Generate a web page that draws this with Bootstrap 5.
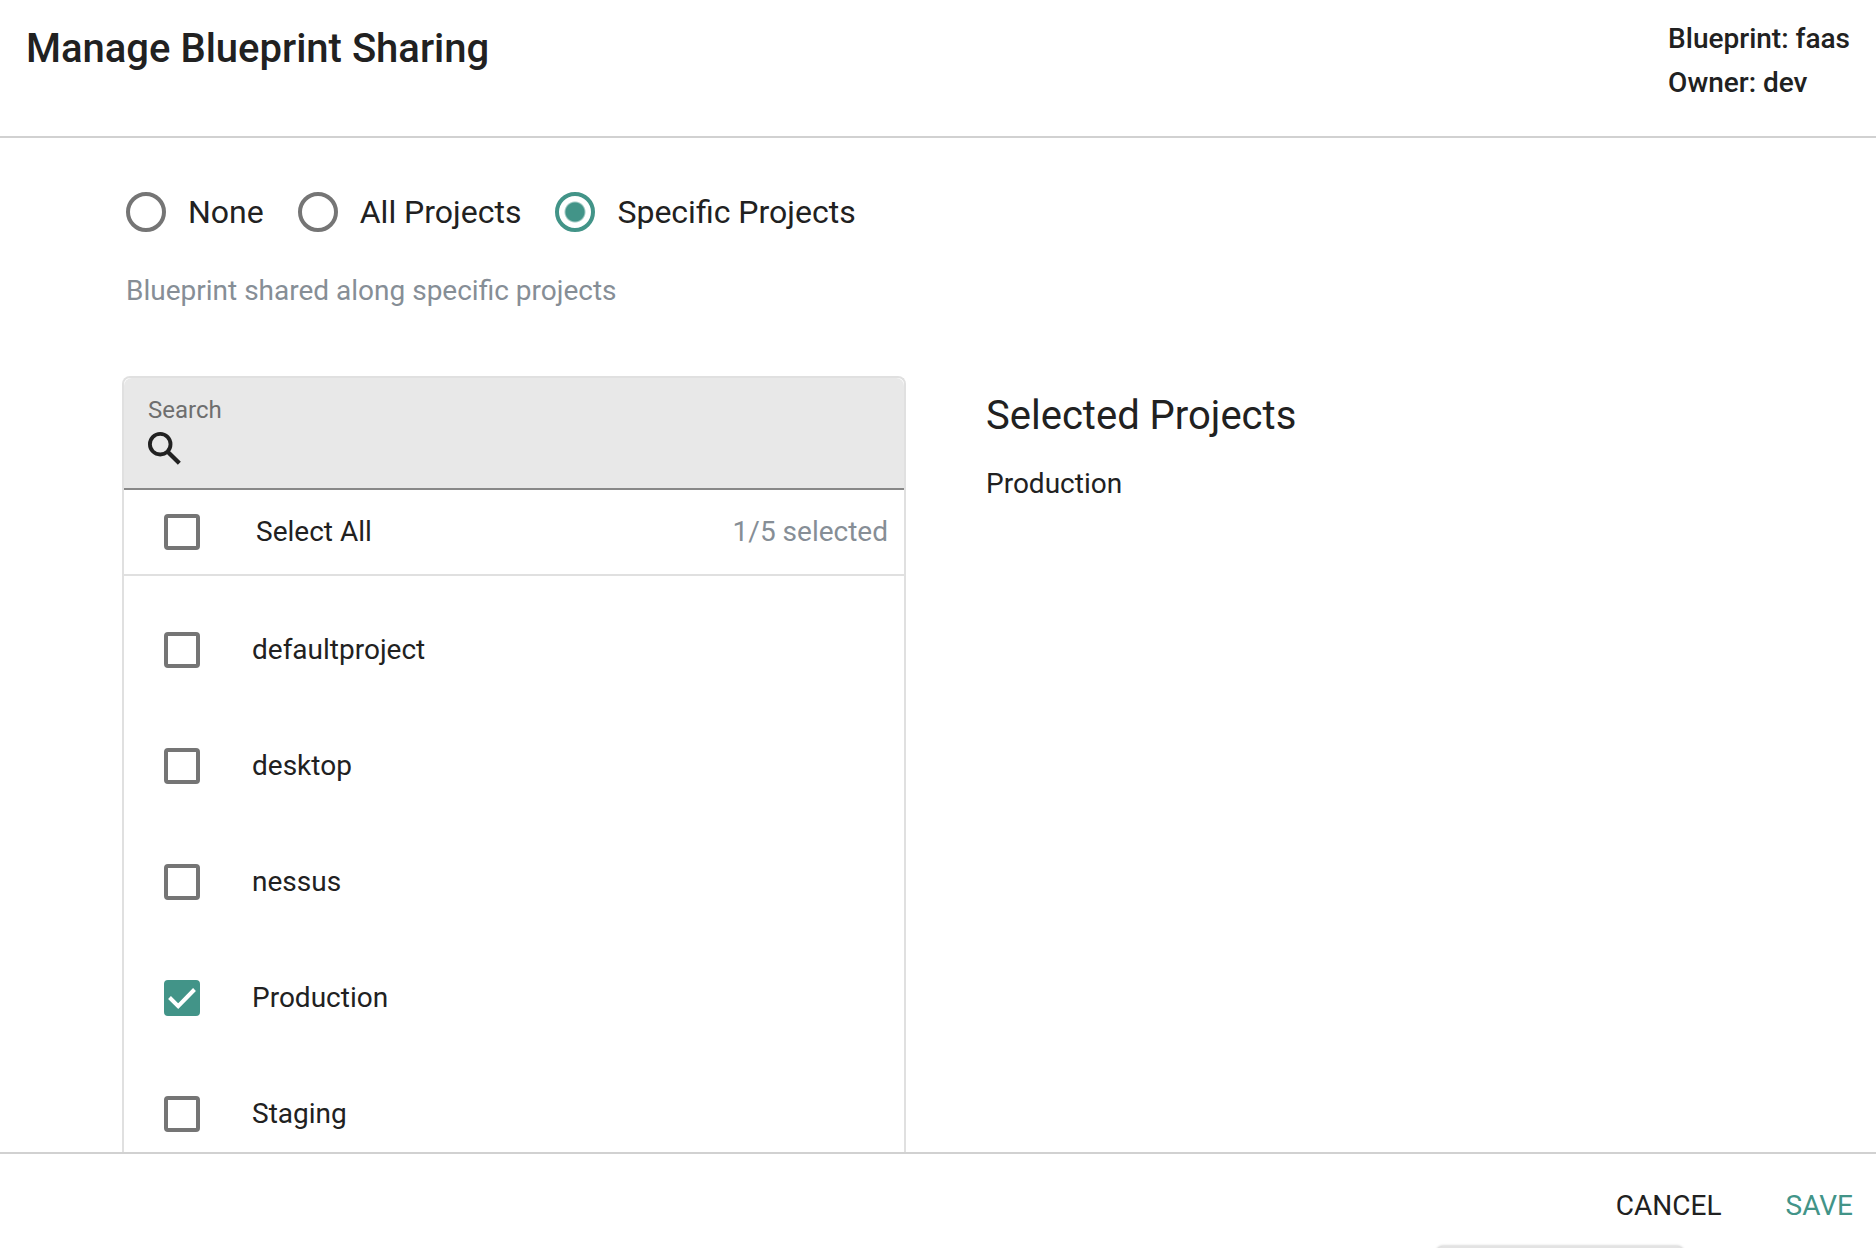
<!DOCTYPE html>
<html lang="en">
<head>
<meta charset="utf-8">
<meta name="viewport" content="width=device-width, initial-scale=1">
<title>Manage Blueprint Sharing</title>
<link href="https://cdn.jsdelivr.net/npm/bootstrap@5.3.0/dist/css/bootstrap.min.css" rel="stylesheet">
<style>
  :root { --teal: #429488; --ink: #212121; --muted: #868e96; --outline: #757575; --line: #d1d1d1; --soft: #e0e0e0; }
  body { font-family: Roboto, "Open Sans", sans-serif; font-size: 28px; line-height: 44px; color: var(--ink); background: #fff; }
  .dialog-head { border-bottom: 2px solid var(--line); padding: 17px 26px 31px; }
  .dialog-title { font-size: 40px; line-height: 64px; font-weight: 500; }
  .dialog-meta { font-weight: 500; }
  .dialog-main { min-height: 0; overflow: hidden; padding: 52px 106px 0 122px; }
  .share-options { gap: 34px; padding-left: 4px; }
  .share-options label { font-size: 32px; line-height: 44px; padding-left: 22px; }
  .share-hint { color: var(--muted); padding-left: 4px; margin: 35px 0 63px; }
  .panes { grid-template-columns: 1fr 1fr; column-gap: 80px; }
  .form-check-input.ring { width: 40px; height: 40px; margin: 0; border: 4px solid var(--outline); }
  .form-check-input.ring:checked { border-color: var(--teal); background: radial-gradient(circle, var(--teal) 0 9px, #fff 11px); }
  .form-check-input.tick { width: 36px; height: 36px; margin: 0; border: 4px solid var(--outline); border-radius: 4px; }
  .form-check-input.tick:checked { border-color: var(--teal); background: var(--teal) url("data:image/svg+xml,%3Csvg xmlns='http://www.w3.org/2000/svg' viewBox='0 0 28 28'%3E%3Cpath d='M1.500 13.500l8.700 8.700L26.500 5.500' fill='none' stroke='white' stroke-width='4'/%3E%3C/svg%3E") center / 28px 28px no-repeat; }
  .picker { border: 2px solid var(--soft); border-bottom: 0; border-radius: 8px 8px 0 0; }
  .search-field { background: #e8e8e8; border-bottom: 2px solid #888; border-radius: 8px 8px 0 0; padding: 14px 24px 18px; }
  .search-field label { font-size: 24px; line-height: 36px; color: #6e6e6e; }
  .search-field input { font-size: 28px; line-height: 40px; height: 42px; }
  .select-all { height: 86px; border-bottom: 2px solid var(--soft); padding: 0 16px 0 40px; }
  .select-all label { padding-left: 56px; }
  .tally { color: var(--muted); }
  .project-list { padding-top: 16px; }
  .project-row { height: 116px; padding-left: 40px; }
  .project-row label { padding-left: 52px; }
  .chosen { padding-top: 16px; }
  .chosen-title { font-size: 40px; line-height: 48px; margin-bottom: 22px; }
  .dialog-foot { position: relative; border-top: 2px solid var(--line); height: 96px; padding: 10px 23px 0 0; gap: 64px; overflow: hidden; }
  .flat-btn { font-size: 28px; line-height: 44px; color: var(--ink); }
  .flat-btn.save { color: var(--teal); }
  .snack { position: absolute; right: 192px; bottom: -12px; width: 248px; height: 14px; border-radius: 8px; background: #e3e3e3; box-shadow: 0 0 3px #bbb; }
</style>
</head>
<body>
<div class="vh-100 d-flex flex-column overflow-hidden">
  <header class="dialog-head flex-shrink-0 d-flex justify-content-between align-items-start">
    <h1 class="dialog-title mb-0">Manage Blueprint Sharing</h1>
    <div class="dialog-meta"><div>Blueprint: faas</div><div>Owner: dev</div></div>
  </header>

  <main class="dialog-main flex-grow-1">
    <div class="share-options d-flex align-items-center" role="radiogroup" aria-label="Sharing">
      <div class="d-flex align-items-center"><input class="form-check-input ring" type="radio" name="share" id="none"><label for="none">None</label></div>
      <div class="d-flex align-items-center"><input class="form-check-input ring" type="radio" name="share" id="all"><label for="all">All Projects</label></div>
      <div class="d-flex align-items-center"><input class="form-check-input ring" type="radio" name="share" id="specific" checked><label for="specific">Specific Projects</label></div>
    </div>
    <p class="share-hint">Blueprint shared along specific projects</p>

    <div class="panes d-grid">
      <section class="picker">
        <div class="search-field">
          <label class="d-block" for="search">Search</label>
          <div class="d-flex align-items-center">
            <svg class="flex-shrink-0" width="34" height="34" viewBox="0 0 32 32" aria-hidden="true" fill="none" stroke="#212121"><circle cx="11.500" cy="11.500" r="9.700" stroke-width="3.600"/><path d="M18 18l1.500 1.500M19 19l10.500 10.500" stroke-width="4"/></svg>
            <input class="form-control border-0 bg-transparent shadow-none py-0" type="text" id="search">
          </div>
        </div>
        <div class="select-all d-flex align-items-center">
          <input class="form-check-input tick" type="checkbox" id="select-all"><label for="select-all">Select All</label>
          <span class="tally ms-auto">1/5 selected</span>
        </div>
        <div class="project-list">
          <div class="project-row d-flex align-items-center"><input class="form-check-input tick" type="checkbox" id="p1"><label for="p1">defaultproject</label></div>
          <div class="project-row d-flex align-items-center"><input class="form-check-input tick" type="checkbox" id="p2"><label for="p2">desktop</label></div>
          <div class="project-row d-flex align-items-center"><input class="form-check-input tick" type="checkbox" id="p3"><label for="p3">nessus</label></div>
          <div class="project-row d-flex align-items-center"><input class="form-check-input tick" type="checkbox" id="p4" checked><label for="p4">Production</label></div>
          <div class="project-row d-flex align-items-center"><input class="form-check-input tick" type="checkbox" id="p5"><label for="p5">Staging</label></div>
        </div>
      </section>
      <section class="chosen">
        <h2 class="chosen-title fw-normal">Selected Projects</h2>
        <div>Production</div>
      </section>
    </div>
  </main>

  <footer class="dialog-foot flex-shrink-0 d-flex justify-content-end align-items-center">
    <button type="button" class="flat-btn btn border-0 p-0">CANCEL</button>
    <button type="button" class="flat-btn save btn border-0 p-0">SAVE</button>
    <div class="snack"></div>
  </footer>
</div>
<script src="https://cdn.jsdelivr.net/npm/bootstrap@5.3.0/dist/js/bootstrap.bundle.min.js"></script>
</body>
</html>
